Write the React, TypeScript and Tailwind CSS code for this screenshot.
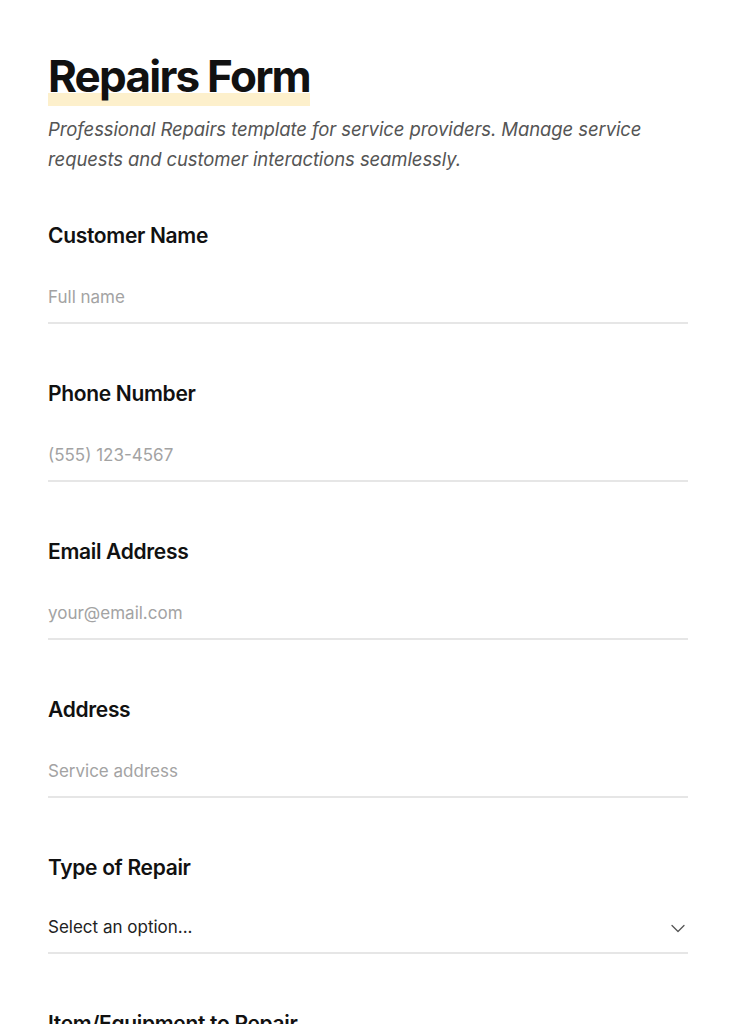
import React from 'react';

const fields = [
  { label: 'Customer Name', placeholder: 'Full name' },
  { label: 'Phone Number', placeholder: '(555) 123-4567' },
  { label: 'Email Address', placeholder: 'your@email.com' },
  { label: 'Address', placeholder: 'Service address' },
];

function ChevronDown() {
  return (
    <svg width="16" height="10" viewBox="0 0 16 10" fill="none" stroke="#555" strokeWidth="1.3" strokeLinecap="round" strokeLinejoin="round">
      <path d="M2 2.5 8 8.5 14 2.5" />
    </svg>
  );
}

export default function App() {
  return (
    <div className="min-h-screen bg-white px-12 pt-[52px] pb-16 font-['Inter',sans-serif] text-[#111]">
      {/* header */}
      <h1 className="inline-block text-[44px] font-bold leading-[48px] tracking-[-0.04em] bg-[linear-gradient(to_bottom,transparent_76%,#fdf0cc_76%)] pb-[6px]">
        Repairs Form
      </h1>
      <p className="mt-[8px] text-[18.5px] italic leading-[30px] text-[#555] tracking-[-0.005em]">
        Professional Repairs template for service providers. Manage service requests and customer interactions seamlessly.
      </p>

      <div className="mt-[48px] flex flex-col gap-[56px]">
        {fields.map((f) => (
          <div key={f.label} className="flex flex-col">
            <label className="text-[21px] font-semibold leading-[28px] tracking-[-0.015em]">{f.label}</label>
            <input
              type="text"
              placeholder={f.placeholder}
              className="mt-[22px] h-[52px] w-full border-b-2 border-[#e6e6e6] bg-transparent text-[17px] outline-none placeholder:text-[#a3a3a3]"
            />
          </div>
        ))}
        <div className="flex flex-col">
          <label className="text-[21px] font-semibold leading-[28px] tracking-[-0.015em]">Type of Repair</label>
          <div className="mt-[22px] flex h-[50px] w-full items-center justify-between border-b-2 border-[#e6e6e6] pr-[2px]">
            <span className="text-[17px] text-[#222]">Select an option...</span>
            <ChevronDown />
          </div>
        </div>
        <div className="flex flex-col">
          <label className="text-[21px] font-semibold leading-[28px] tracking-[-0.015em]">Item/Equipment to Repair</label>
          <input
            type="text"
            placeholder="e.g. Dishwasher, Laptop"
            className="mt-[22px] h-[52px] w-full border-b-2 border-[#e6e6e6] bg-transparent text-[17px] outline-none placeholder:text-[#a3a3a3]"
          />
        </div>
      </div>
    </div>
  );
}
